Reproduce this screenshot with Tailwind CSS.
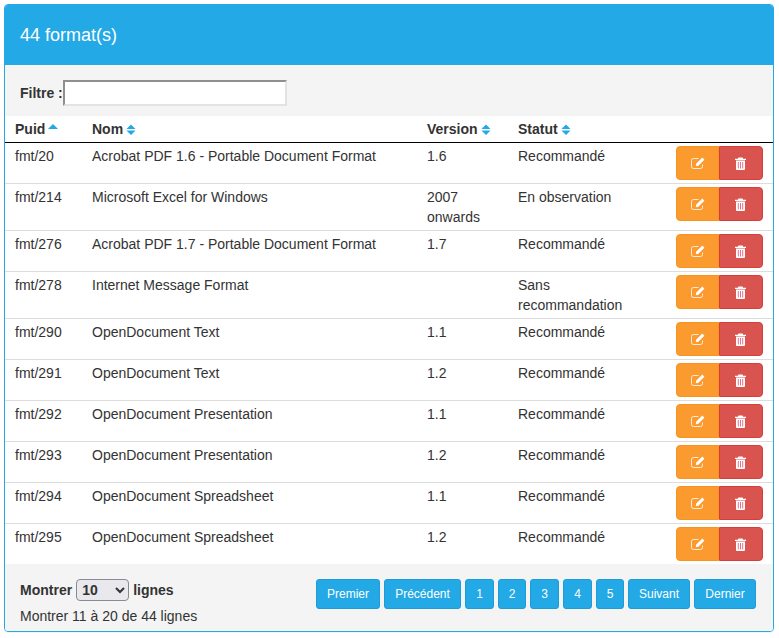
<!DOCTYPE html>
<html lang="fr">
<head>
  <meta charset="UTF-8">
  <meta name="viewport" content="width=device-width, initial-scale=1.0">
  <title>Formats</title>
  <script src="https://cdn.jsdelivr.net/npm/@tailwindcss/browser@4"></script>
</head>
<body class="bg-white font-['Liberation_Sans',Arial,sans-serif] text-[14px] leading-5 text-[#333]">
<div class="p-1">
  <div class="w-[770px] border border-[#23a9e5] rounded-[4px] overflow-hidden shadow-[0_1px_1px_rgba(0,0,0,0.05)]">
    <div class="h-[60px] bg-[#23a9e5] pl-[15px] flex items-center text-white text-[18px]">44 format(s)</div>

    <div class="h-[51px] bg-[#f4f4f4] pl-[15px] flex items-center pt-[5px]">
      <label for="filtre" class="font-bold">Filtre :</label>
      <input id="filtre" type="text" class="w-[224px] h-[26px] bg-white border-2 border-t-[#8f8f8f] border-l-[#8f8f8f] border-r-[#e3e3e3] border-b-[#e3e3e3]">
    </div>

    <table class="w-full table-fixed border-collapse bg-white">
      <colgroup>
        <col class="w-[77px]"><col class="w-[335px]"><col class="w-[91px]"><col class="w-[130px]"><col>
      </colgroup>
      <thead>
        <tr class="border-b border-black text-left">
          <th class="px-[10px] py-[3px] font-bold"><span class="inline-flex items-center gap-[3px]">Puid
            <svg width="10" height="11" viewBox="0 0 10 11" class="fill-[#23a9e5]"><path d="M0 5 5 0l5 5z"/></svg></span></th>
          <th class="px-[10px] py-[3px] font-bold"><span class="inline-flex items-center gap-[3px]">Nom
            <svg width="10" height="11" viewBox="0 0 10 11" class="fill-[#23a9e5]"><path d="M.500 5 5 .500 9.500 5zM.500 6.500h9L5 11z"/></svg></span></th>
          <th class="px-[10px] py-[3px] font-bold"><span class="inline-flex items-center gap-[3px]">Version
            <svg width="10" height="11" viewBox="0 0 10 11" class="fill-[#23a9e5]"><path d="M.500 5 5 .500 9.500 5zM.500 6.500h9L5 11z"/></svg></span></th>
          <th class="px-[10px] py-[3px] font-bold"><span class="inline-flex items-center gap-[3px]">Statut
            <svg width="10" height="11" viewBox="0 0 10 11" class="fill-[#23a9e5]"><path d="M.500 5 5 .500 9.500 5zM.500 6.500h9L5 11z"/></svg></span></th>
          <th></th>
        </tr>
      </thead>
      <tbody id="rows"></tbody>
    </table>

    <div class="h-[67px] bg-[#f4f4f4] pl-[15px] pr-[17px] flex justify-between">
      <div class="pt-[15px]">
        <div class="flex items-center gap-1 h-[22px] font-bold">
          <span>Montrer</span>
          <select class="w-[53px] h-[22px] border border-[#8a8a94] rounded-[4px] bg-[#e9e9ed] font-bold text-[14px] pl-[1px]"><option>10</option></select>
          <span>lignes</span>
        </div>
        <div class="mt-[5px]">Montrer 11 à 20 de 44 lignes</div>
      </div>
      <div class="pt-[15px] flex gap-1 items-start text-[12px] text-white">
        <button class="h-[30px] w-[64px] bg-[#23a9e5] border border-[#1f9cd6] rounded-[3px]">Premier</button>
        <button class="h-[30px] w-[77px] bg-[#23a9e5] border border-[#1f9cd6] rounded-[3px]">Précédent</button>
        <button class="h-[30px] w-[29px] bg-[#23a9e5] border border-[#1f9cd6] rounded-[3px]">1</button>
        <button class="h-[30px] w-[28px] bg-[#23a9e5] border border-[#1f9cd6] rounded-[3px]">2</button>
        <button class="h-[30px] w-[29px] bg-[#23a9e5] border border-[#1f9cd6] rounded-[3px]">3</button>
        <button class="h-[30px] w-[29px] bg-[#23a9e5] border border-[#1f9cd6] rounded-[3px]">4</button>
        <button class="h-[30px] w-[28px] bg-[#23a9e5] border border-[#1f9cd6] rounded-[3px]">5</button>
        <button class="h-[30px] w-[62px] bg-[#23a9e5] border border-[#1f9cd6] rounded-[3px]">Suivant</button>
        <button class="h-[30px] w-[62px] bg-[#23a9e5] border border-[#1f9cd6] rounded-[3px]">Dernier</button>
      </div>
    </div>
  </div>
</div>

<script>
const formats = [
  ['fmt/20', 'Acrobat PDF 1.6 - Portable Document Format', '1.6', 'Recommandé'],
  ['fmt/214', 'Microsoft Excel for Windows', '2007 onwards', 'En observation'],
  ['fmt/276', 'Acrobat PDF 1.7 - Portable Document Format', '1.7', 'Recommandé'],
  ['fmt/278', 'Internet Message Format', '', 'Sans recommandation'],
  ['fmt/290', 'OpenDocument Text', '1.1', 'Recommandé'],
  ['fmt/291', 'OpenDocument Text', '1.2', 'Recommandé'],
  ['fmt/292', 'OpenDocument Presentation', '1.1', 'Recommandé'],
  ['fmt/293', 'OpenDocument Presentation', '1.2', 'Recommandé'],
  ['fmt/294', 'OpenDocument Spreadsheet', '1.1', 'Recommandé'],
  ['fmt/295', 'OpenDocument Spreadsheet', '1.2', 'Recommandé']
];
const editIcon = `<svg width="14" height="12" viewBox="0 0 14 12" fill="none"><path d="M7.500 1.500h-5a2 2 0 0 0-2 2v6a2 2 0 0 0 2 2h7a2 2 0 0 0 2-2V7.500" stroke="#fff" stroke-opacity=".8"/><path d="M11.300.600 13.400 2.700 7.400 8.700 4.800 9.200 5.300 6.600z" fill="#fff"/></svg>`;
const trashIcon = `<svg width="11" height="13" viewBox="0 0 11 13"><path fill="#fff" d="M3.500.500h4l.7 1.200H11v1.300H0V1.700h2.800zM1 3.500h9V12a1 1 0 0 1-1 1H2a1 1 0 0 1-1-1z"/><path stroke="#e8718a" d="M3.300 5v6.500M5.500 5v6.500M7.700 5v6.500"/></svg>`;
const rows = formats.map((f, i) => `
  <tr class="${i < formats.length - 1 ? 'border-b border-[#ddd]' : ''} align-top">
    <td class="px-[10px] py-[3px]">${f[0]}</td>
    <td class="px-[10px] py-[3px]">${f[1]}</td>
    <td class="px-[10px] py-[3px]">${f[2]}</td>
    <td class="px-[10px] py-[3px]">${f[3]}</td>
    <td class="pr-[10px] py-[3px]">
      <div class="flex justify-end">
        <button class="w-[43px] h-[34px] flex items-center justify-center bg-[#fb9a2f] border border-[#f79420] rounded-l-[4px]">${editIcon}</button>
        <button class="w-[44px] h-[34px] flex items-center justify-center pr-px bg-[#d9534f] border border-[#d43f3a] rounded-r-[4px]">${trashIcon}</button>
      </div>
    </td>
  </tr>`).join('');
document.getElementById('rows').innerHTML = rows;
</script>
</body>
</html>
